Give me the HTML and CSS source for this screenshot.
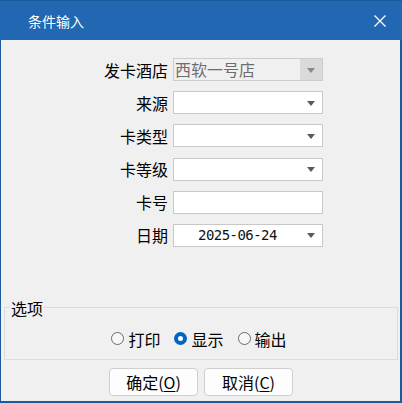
FILE: index.html
```html
<!DOCTYPE html>
<html lang="zh-CN">

<head>
  <meta charset="UTF-8">
  <meta name="viewport" content="width=device-width, initial-scale=1.0">
  <title>条件输入</title>
  <link rel="stylesheet" href="styles.css">
</head>

<body>
  <div class="dialog">
    <div class="titlebar">
      <span class="title">条件输入</span>
      <svg class="close" width="12" height="12" viewBox="0 0 12 12">
        <path d="M0.5 0.5 L11.5 11.5 M11.5 0.5 L0.5 11.5" stroke="#fff" stroke-width="1.3" fill="none" />
      </svg>
    </div>

    <div class="form">
      <label>发卡酒店</label>
      <div class="combo disabled">
        <span class="value">西软一号店</span>
        <span class="drop"><i class="arrow"></i></span>
      </div>

      <label>来源</label>
      <div class="combo">
        <span class="value"></span>
        <span class="drop"><i class="arrow"></i></span>
      </div>

      <label>卡类型</label>
      <div class="combo">
        <span class="value"></span>
        <span class="drop"><i class="arrow"></i></span>
      </div>

      <label>卡等级</label>
      <div class="combo">
        <span class="value"></span>
        <span class="drop"><i class="arrow"></i></span>
      </div>

      <label>卡号</label>
      <div class="textbox"></div>

      <label>日期</label>
      <div class="combo">
        <span class="value date">2025-06-24</span>
        <span class="drop"><i class="arrow"></i></span>
      </div>
    </div>

    <fieldset class="options">
      <legend>选项</legend>
      <div class="radios">
        <label class="radio"><input type="radio" name="out"><span>打印</span></label>
        <label class="radio"><input type="radio" name="out" checked><span>显示</span></label>
        <label class="radio"><input type="radio" name="out"><span>输出</span></label>
      </div>
    </fieldset>

    <div class="buttons">
      <button class="btn">确定(<u>O</u>)</button>
      <button class="btn">取消(<u>C</u>)</button>
    </div>
  </div>
</body>

</html>
```

FILE: styles.css
```css
html,
body {
  margin: 0;
  padding: 0;
}

body {
  width: 402px;
  height: 403px;
  font-family: 'Noto Sans CJK SC', 'Noto Sans', sans-serif;
  font-size: 16px;
  color: #000;
  background-color: #f0f0f0;
}

.dialog {
  box-sizing: border-box;
  width: 402px;
  height: 403px;
  border: 1px solid #1b5a9c;
  border-top: none;
  border-right-width: 2px;
  border-bottom-width: 2px;
  background-color: #f0f0f0;
  display: flex;
  flex-direction: column;
}

/* 标题栏 */
.titlebar {
  height: 40px;
  margin: 0 -2px 0 -1px;
  padding: 0 16px 0 28px;
  background-color: #2167b1;
  border-top: 1px solid #1b5a9c;
  box-sizing: border-box;
  display: flex;
  align-items: center;
  justify-content: space-between;
}

.title {
  color: #fff;
  font-size: 14px;
  line-height: 20px;
}

.close {
  display: block;
}

/* 表单 */
.form {
  display: grid;
  grid-template-columns: 167px 150px;
  grid-auto-rows: 23px;
  column-gap: 5px;
  row-gap: 10.2px;
  align-items: center;
  margin-top: 18px;
}

.form > label {
  text-align: right;
  line-height: 22px;
  white-space: nowrap;
}

.combo,
.textbox {
  box-sizing: border-box;
  height: 23px;
  border: 1px solid #c8c8c8;
  background-color: #fff;
  display: flex;
  align-items: stretch;
}

.combo .value {
  flex: 1;
  line-height: 21px;
  padding-left: 1px;
  white-space: nowrap;
}

.combo .date {
  text-align: center;
  font-family: 'DejaVu Sans Mono', 'Liberation Mono', monospace;
  font-size: 14px;
  letter-spacing: -0.55px;
  color: #111;
}

.drop {
  width: 22px;
  display: flex;
  align-items: center;
  justify-content: center;
}

.arrow {
  display: block;
  width: 0;
  height: 0;
  border-left: 4.5px solid transparent;
  border-right: 4.5px solid transparent;
  border-top: 5px solid #5a5a5a;
  margin-top: 1px;
}

.combo.disabled {
  background-color: #f0f0f0;
  border-color: #cccccc;
}

.combo.disabled .value {
  color: #6d6d6d;
}

.combo.disabled .drop {
  background-color: #dadada;
}

.combo.disabled .arrow {
  border-top-color: #8a8a8a;
}

/* 选项 */
.options {
  margin: 50px 2px 0 3px;
  padding: 10px 0 10px;
  border: 1px solid #dcdcdc;
  min-width: 0;
}

.options legend {
  padding: 0 1px;
  margin-left: 5px;
  line-height: 22px;
}

.radios {
  display: flex;
  justify-content: center;
  gap: 14px;
  height: 20px;
  align-items: center;
  margin-right: 4px;
}

.radio {
  display: flex;
  align-items: center;
  gap: 4px;
  line-height: 20px;
  white-space: nowrap;
}

.radio input {
  appearance: none;
  -webkit-appearance: none;
  box-sizing: border-box;
  width: 13px;
  height: 13px;
  margin: 0;
  border: 1px solid #6a6a6a;
  border-radius: 50%;
  background-color: #f7f7f7;
}

.radio input:checked {
  border: 4px solid #0066bf;
  background-color: #fff;
}

/* 按钮 */
.buttons {
  display: flex;
  justify-content: center;
  gap: 6px;
  margin-top: 8px;
  padding-left: 1px;
}

.btn {
  box-sizing: border-box;
  width: 89px;
  height: 28px;
  padding: 0;
  border: 1px solid #cfcfcf;
  border-radius: 4px;
  background-color: #fdfdfd;
  font-family: 'Noto Sans CJK SC', 'Noto Sans', sans-serif;
  font-size: 16px;
  color: #000;
  line-height: 24px;
}

.btn u {
  text-underline-offset: 2px;
}
```
